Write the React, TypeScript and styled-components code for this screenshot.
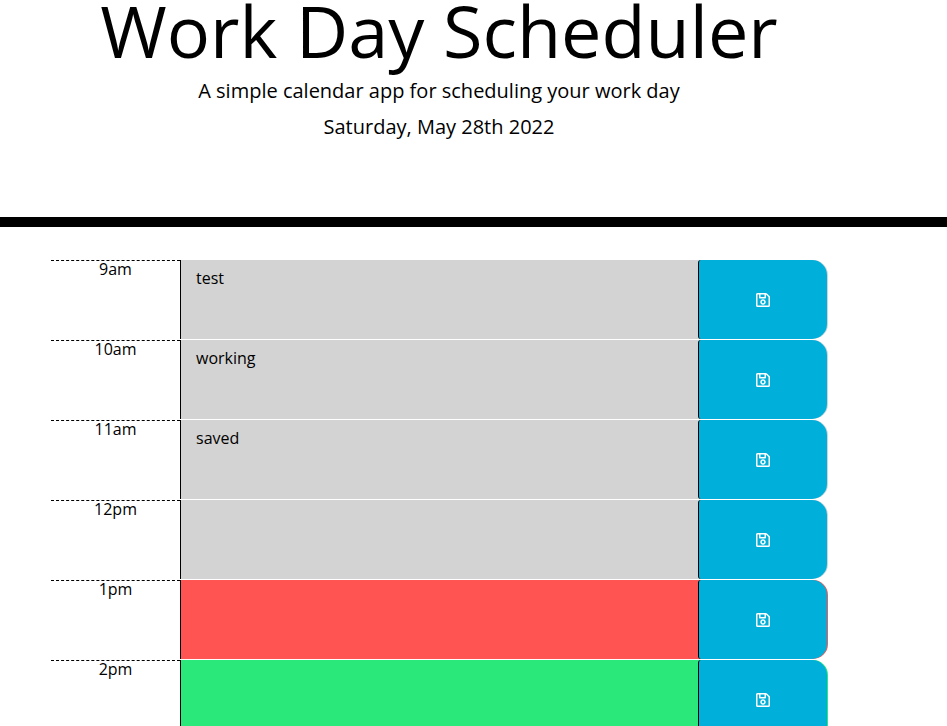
import React, { useState } from "react";
import styled, { createGlobalStyle } from "styled-components";
import { FaRegSave } from "react-icons/fa";

const GlobalStyle = createGlobalStyle`
  *, *::before, *::after { box-sizing: border-box; }
  body {
    margin: 0;
    font-family: "Open Sans", sans-serif;
    font-size: 16px;
    line-height: 1;
    color: #000;
    background: #fff;
    overflow-x: hidden;
  }
`;

const Page = styled.div`
  height: 100vh;
  overflow: hidden;
`;

const Header = styled.header`
  padding: 0 69px 72px 0;
  border-bottom: 10px solid #000;
  text-align: center;
`;

const Title = styled.h1`
  margin: 0;
  padding-bottom: 13px;
  font-size: 72px;
  font-weight: 400;
  line-height: 60px;
`;

const Lead = styled.p`
  margin: 0;
  font-size: 20px;
  line-height: 36px;
`;

const Planner = styled.main`
  padding: 33px 119px 0 51px;
`;

type Phase = "past" | "present" | "future";

const phaseColors: Record<Phase, string> = {
  past: "#d3d3d3",
  present: "#ff5451",
  future: "#2ae879",
};

const Row = styled.section`
  display: grid;
  grid-template-columns: 129fr 648fr;
  height: 80px;
`;

const Hour = styled.label`
  border-top: 1px dashed #000;
  text-align: center;
  line-height: 16px;
`;

const Block = styled.div<{ $phase: Phase }>`
  display: grid;
  grid-template-columns: 517fr 130fr;
  height: 79px;
  border-left: 1px solid #000;
  border-radius: 0 15px 15px 0;
  background: ${({ $phase }) => phaseColors[$phase]};
`;

const Entry = styled.textarea`
  width: 100%;
  height: 100%;
  margin: 0;
  padding: 6px 15px;
  border: 0;
  outline: 0;
  resize: none;
  overflow: hidden;
  font: inherit;
  line-height: 24px;
  color: #000;
  background: transparent;
`;

const SaveButton = styled.button`
  display: flex;
  align-items: center;
  justify-content: center;
  height: 100%;
  margin-right: 1px;
  padding: 0;
  border: 0;
  border-left: 1px solid #000;
  border-radius: 3px 15px 15px 3px;
  font-size: 16px;
  color: #fff;
  background: #00b0db;
  cursor: pointer;
`;

const blocks: { hour: string; text: string; phase: Phase }[] = [
  { hour: "9am", text: "test", phase: "past" },
  { hour: "10am", text: "working", phase: "past" },
  { hour: "11am", text: "saved", phase: "past" },
  { hour: "12pm", text: "", phase: "past" },
  { hour: "1pm", text: "", phase: "present" },
  { hour: "2pm", text: "", phase: "future" },
];

export default function App() {
  const [entries, setEntries] = useState(blocks.map((b) => b.text));
  return (
    <Page>
      <GlobalStyle />
      <Header>
        <Title>Work Day Scheduler</Title>
        <Lead>A simple calendar app for scheduling your work day</Lead>
        <Lead>Saturday, May 28th 2022</Lead>
      </Header>
      <Planner>
        {blocks.map((block, i) => (
          <Row key={block.hour}>
            <Hour htmlFor={"entry-" + block.hour}>{block.hour}</Hour>
            <Block $phase={block.phase}>
              <Entry
                id={"entry-" + block.hour}
                value={entries[i]}
                spellCheck={false}
                onChange={(e) => setEntries(entries.map((t, j) => (j === i ? e.target.value : t)))}
              />
              <SaveButton type="button" aria-label={"Save " + block.hour}>
                <FaRegSave aria-hidden="true" />
              </SaveButton>
            </Block>
          </Row>
        ))}
      </Planner>
    </Page>
  );
}
